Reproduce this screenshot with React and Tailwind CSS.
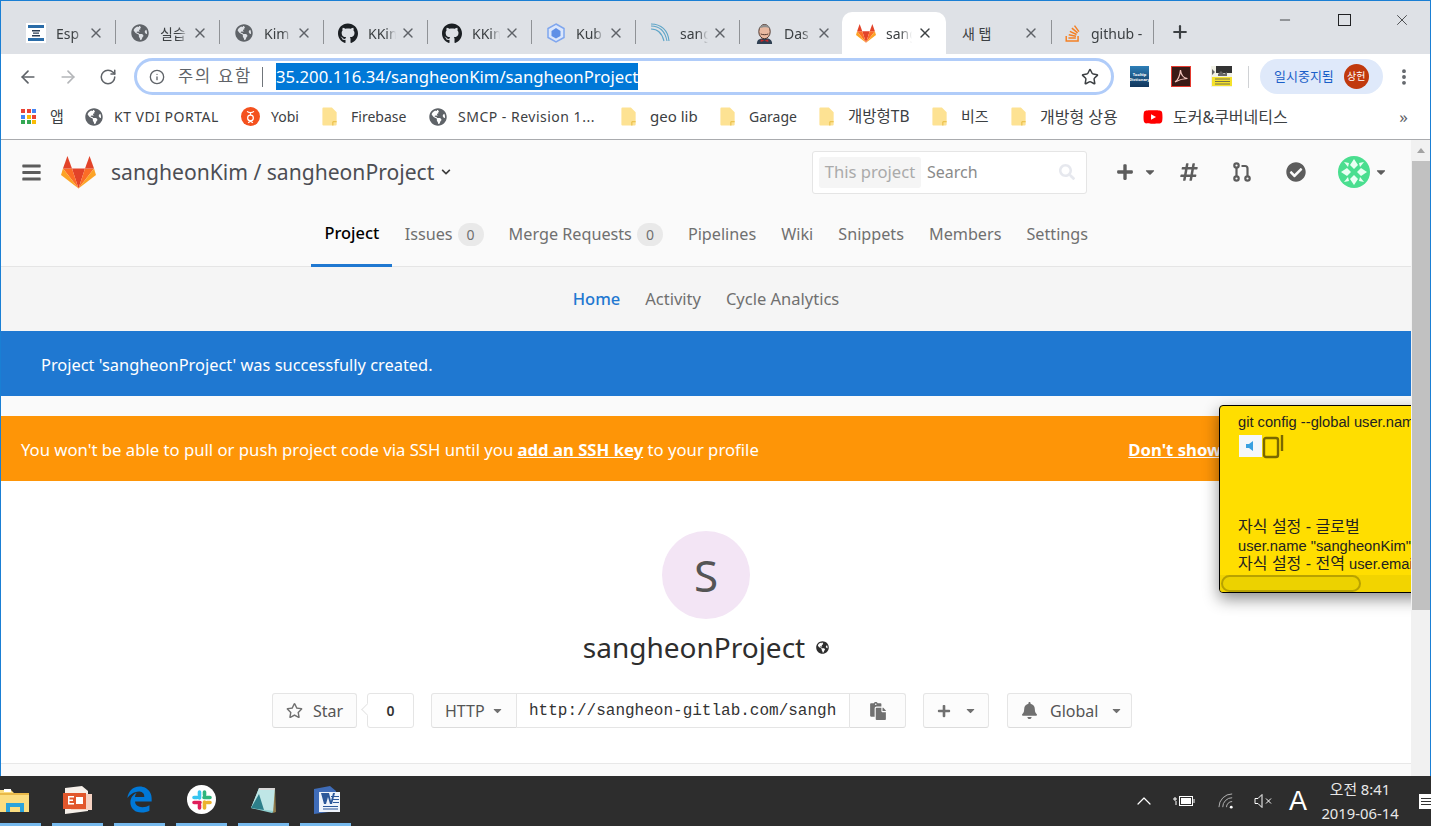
import React from 'react'
import {ArrowLeft, ArrowRight, RotateCw, Star, Info, X, Plus, Minus, ChevronUp, EllipsisVertical} from 'lucide-react'
import {FaGithub, FaStackOverflow, FaGlobeAmericas, FaBars, FaPlus, FaHashtag, FaCheckCircle, FaBell, FaRegStar, FaSearch, FaCaretDown, FaChevronDown, FaEdgeLegacy, FaPaste, FaYoutube} from 'react-icons/fa'

const Globe = () => <FaGlobeAmericas className="text-[18px] text-[#5f6368] shrink-0" />

const Fox = ({className}) => (
  <svg viewBox="0 0 36 34" className={className}>
    <polygon points="18,33.5 11.3,13 24.7,13" fill="#e24329" />
    <polygon points="18,33.5 11.3,13 2,13" fill="#fc6d26" />
    <polygon points="18,33.5 24.7,13 34,13" fill="#fc6d26" />
    <polygon points="2,13 0,19.5 18,33.5" fill="#fca326" />
    <polygon points="34,13 36,19.5 18,33.5" fill="#fca326" />
    <polygon points="2,13 6.6,0 11.3,13" fill="#e24329" />
    <polygon points="24.7,13 29.4,0 34,13" fill="#e24329" />
  </svg>
)

const FolderBookmark = () => (
  <svg viewBox="0 0 16 20" className="w-[16px] h-[19px] shrink-0 -ml-[1px]">
    <path d="M1 0.5h9l5 5v13a1 1 0 0 1-1 1H1a1 1 0 0 1-1-1V1.5a1 1 0 0 1 1-1z" fill="#fde293" />
    <path d="M11 19.5v-4h4" fill="none" stroke="#e8b93c" strokeWidth="1" />
  </svg>
)

const YobiIcon = () => (
  <svg viewBox="0 0 20 20" className="w-[19px] h-[19px] shrink-0">
    <circle cx="10" cy="10" r="10" fill="#f4511e" />
    <path d="M6.500 4.500c1 2 6 2 7 0M10 6.500v2" fill="none" stroke="#fff" strokeWidth="1.300" />
    <circle cx="10" cy="11.500" r="3" fill="none" stroke="#fff" strokeWidth="1.300" />
    <path d="M7.500 16.500l5-3M12.500 16.500l-5-3" fill="none" stroke="#fff" strokeWidth="1.300" />
  </svg>
)

const EspIcon = () => (
  <svg viewBox="0 0 20 20" className="w-[20px] h-[20px]">
    <rect width="20" height="20" fill="#fff" />
    <path d="M2 2h16v3H2zM2 15h16v3H2z" fill="#2a6ca8" />
    <path d="M6 7h8v1.4H6zM7 9.4h6v1.4H7zM6 12h8v1.4H6z" fill="#2b3c52" />
  </svg>
)

const KubeIcon = () => (
  <svg viewBox="0 0 20 20" className="w-[20px] h-[20px]">
    <polygon points="10,1 18,5.5 18,14.5 10,19 2,14.5 2,5.5" fill="#dbe6fb" stroke="#7fa6ee" strokeWidth="1.5" />
    <polygon points="10,5 14.5,8 14.5,13 10,15.5 5.5,13 5.5,8" fill="#5f8fe6" />
  </svg>
)

const WaveIcon = () => (
  <svg viewBox="0 0 20 20" className="w-[20px] h-[20px]" fill="none" stroke="#5ea5c8" strokeWidth="1.1">
    <path d="M1 3c8 0 14 5 16 15" />
    <path d="M1 6c6 0 11 4 13 12" />
    <path d="M1 1c10 0 17 6 18 17" />
  </svg>
)

const JenkinsIcon = () => (
  <svg viewBox="0 0 20 22" className="w-[19px] h-[21px]">
    <path d="M2 22c0-4 2-6 8-6s8 2 8 6z" fill="#2f3f52" />
    <ellipse cx="10" cy="9" rx="6" ry="7.5" fill="#e8b8a0" stroke="#4a3028" strokeWidth="1" />
    <path d="M4 6c1-5 11-6 12 0-3-2-9-2-12 0z" fill="#8f8f8f" />
    <path d="M6 11.500c2 1 6 1 8 0" fill="none" stroke="#4a3028" strokeWidth="1" />
    <path d="M6 17l4 1.500L14 17v3l-4-1.500L6 20z" fill="#c62828" />
  </svg>
)

const tabs = [
  {label: 'Esp', icon: <EspIcon />, sep: true},
  {label: '실습 과제', icon: <Globe />, sep: true},
  {label: 'Kim', icon: <Globe />, sep: true},
  {label: 'KKim', icon: <FaGithub className="text-[21px] text-[#1b1f23]" />, sep: true},
  {label: 'KKim', icon: <FaGithub className="text-[21px] text-[#1b1f23]" />, sep: true},
  {label: 'Kub', icon: <KubeIcon />, sep: true},
  {label: 'sang', icon: <WaveIcon />, sep: true},
  {label: 'Das', icon: <JenkinsIcon />, sep: false},
  {label: 'sang', icon: <Fox className="w-[20px] h-[19px]" />, active: true, sep: false},
  {label: '새 탭', sep: true},
  {label: 'github -', icon: <FaStackOverflow className="text-[19px] text-[#f48024]" />, sep: true, wide: true},
]

function Tab({tab}) {
  if (tab.active) {
    return (
      <div className="w-[104px] h-[42px] -ml-[2px] mr-[2px] bg-white rounded-t-[10px] flex items-center pl-[14px] shrink-0 text-[#3c4043]">
        <span className="w-[20px] flex justify-center shrink-0">{tab.icon}</span>
        <span className="ml-[10px] w-[26px] overflow-hidden whitespace-nowrap text-[14px] [mask-image:linear-gradient(to_right,black_55%,transparent)]">{tab.label}</span>
        <X size={16} strokeWidth={2} className="ml-[5px] text-[#3c4043]" />
      </div>
    )
  }
  if (tab.wide) {
    return (
      <div className="w-[102px] h-[42px] flex items-center shrink-0 relative pl-[10px] text-[#3c4043]">
        <span className="w-[20px] flex justify-center shrink-0">{tab.icon}</span>
        <span className="ml-[9px] w-[60px] overflow-hidden whitespace-nowrap text-[14px] [mask-image:linear-gradient(to_right,black_85%,transparent)]">{tab.label}</span>
        <span className="absolute right-0 top-[8px] h-[24px] w-px bg-[#8f9296]" />
      </div>
    )
  }
  return (
    <div className="w-[104px] h-[42px] flex items-center shrink-0 relative pl-[14px] text-[#3c4043]">
      {tab.icon && <span className="w-[20px] flex justify-center shrink-0">{tab.icon}</span>}
      <span className={tab.icon ? 'ml-[10px] w-[28px] overflow-hidden whitespace-nowrap text-[14px] [mask-image:linear-gradient(to_right,black_65%,transparent)]' : 'w-[57px] whitespace-nowrap text-[14px]'}>{tab.label}</span>
      <X size={16} strokeWidth={2} className="ml-[4px] text-[#5f6368]" />
      {tab.sep && <span className="absolute right-0 top-[8px] h-[24px] w-px bg-[#8f9296]" />}
    </div>
  )
}

function TabStrip() {
  return (
    <div className="h-[53px] bg-[#dee1e6] flex items-end pl-[11px] shrink-0">
      {tabs.map((t, i) => <Tab key={i} tab={t} />)}
      <Plus size={20} strokeWidth={2.6} className="ml-[16px] mb-[12px] text-[#3c4043]" />
      <div className="ml-auto self-start flex items-center h-[37px] text-[#202124]">
        <Minus size={16} strokeWidth={1.2} className="mr-[45px]" />
        <span className="w-[13px] h-[12px] border border-[#202124] mr-[42px]" />
        <X size={18} strokeWidth={1} className="mr-[19px]" />
      </div>
    </div>
  )
}

function ExtTooltip() {
  return (
    <div className="w-[19px] h-[21px] bg-gradient-to-b from-[#2d7fb8] to-[#12365c] flex flex-col items-center justify-center text-[4px] leading-[5px] font-bold text-white overflow-hidden">
      <span>Tooltip</span>
      <span>Dictionary</span>
    </div>
  )
}

function ExtPdf() {
  return (
    <svg viewBox="0 0 20 21" className="w-[20px] h-[21px]">
      <rect x="0.5" y="0.5" width="19" height="20" fill="#3a1a16" stroke="#e53a2f" />
      <path d="M4 16c3-2 5-7 5.5-12 .5 5 2.5 8 7 8.5-4 0-8 1-12.5 3.500z" fill="none" stroke="#f4c5bd" strokeWidth="1.2" />
    </svg>
  )
}

function ExtNote() {
  return (
    <svg viewBox="0 0 21 21" className="w-[21px] h-[21px]">
      <rect width="21" height="21" fill="#f1f1e6" />
      <rect x="5" y="0" width="16" height="7" fill="#333" />
      <path d="M1 3l3 3-3 3zM7 8l3-3 3 3 3-2v4H7z" fill="#666" />
      <rect x="1" y="11" width="20" height="9" fill="#f5e22a" />
      <path d="M4 13h15M4 15.500h15M4 18h15" stroke="#555" strokeWidth="0.8" />
    </svg>
  )
}

function Toolbar() {
  return (
    <div className="h-[42px] pt-[3px] flex items-center bg-white shrink-0 text-[#5f6368]">
      <ArrowLeft size={20} strokeWidth={2} className="ml-[17px]" />
      <ArrowRight size={20} strokeWidth={2} className="ml-[20px] text-[#b4b6b9]" />
      <RotateCw size={18} strokeWidth={2} className="ml-[21px]" />
      <div className="ml-[17px] w-[980px] h-[37px] rounded-full border-[3px] border-[#b0ccf9] flex items-center pl-[12px] pr-[12px]">
        <Info size={16} strokeWidth={2} className="text-[#5f6368]" />
        <span className="ml-[13px] text-[16.500px] tracking-[1.800px] text-[#5f6368] whitespace-nowrap">주의 요함</span>
        <span className="ml-[10px] w-px h-[20px] bg-[#70757a]" />
        <span className="ml-[13px] bg-[#0078d7] text-white text-[16.700px] leading-[27px] h-[27px] whitespace-nowrap">35.200.116.34/sangheonKim/sangheonProject</span>
        <Star size={18} strokeWidth={2} className="ml-auto text-[#3c4043]" />
      </div>
      <span className="ml-[16px] flex"><ExtTooltip /></span>
      <span className="ml-[22px] flex"><ExtPdf /></span>
      <span className="ml-[20px] flex"><ExtNote /></span>
      <span className="ml-[16px] w-px h-[22px] bg-[#d0d2d5]" />
      <div className="ml-[11px] w-[123px] h-[35px] rounded-full bg-[#dfe9fa] flex items-center pl-[14px] text-[#1a5fc8]">
        <span className="text-[13px] whitespace-nowrap">일시중지됨</span>
        <span className="ml-[10px] w-[25px] h-[25px] rounded-full bg-[#c1390d] text-white text-[10px] flex items-center justify-center">상헌</span>
      </div>
      <EllipsisVertical size={20} strokeWidth={2.6} className="ml-[11px]" />
    </div>
  )
}

function AppsGrid() {
  const colors = ['#ea4335', '#ea4335', '#4285f4', '#4285f4', '#fbbc05', '#ea4335', '#34a853', '#34a853', '#fbbc05']
  return (
    <span className="w-[15px] grid grid-cols-3 gap-[1.5px] shrink-0">
      {colors.map((c, i) => <span key={i} className="w-[4px] h-[4px]" style={{background: c}} />)}
    </span>
  )
}

const bookmarks = [
  {label: '앱', icon: <AppsGrid />, cls: 'w-[64px] gap-[14px] text-[15px]'},
  {label: 'KT VDI PORTAL', icon: <Globe />, cls: 'w-[156px] gap-[11px] text-[14px] tracking-[0.5px]'},
  {label: 'Yobi', icon: <YobiIcon />, cls: 'w-[82px] gap-[11px] text-[14px]'},
  {label: 'Firebase', icon: <FolderBookmark />, cls: 'w-[106px] gap-[13px] text-[14px]'},
  {label: 'SMCP - Revision 1...', icon: <Globe />, cls: 'w-[193px] gap-[11px] text-[14px] tracking-[0.5px]'},
  {label: 'geo lib', icon: <FolderBookmark />, cls: 'w-[99px] gap-[13px] text-[15px]'},
  {label: 'Garage', icon: <FolderBookmark />, cls: 'w-[99px] gap-[13px] text-[14px]'},
  {label: '개방형TB', icon: <FolderBookmark />, cls: 'w-[113px] gap-[13px] text-[15.500px]'},
  {label: '비즈', icon: <FolderBookmark />, cls: 'w-[79px] gap-[13px] text-[15px]'},
  {label: '개방형 상용', icon: <FolderBookmark />, cls: 'w-[131px] gap-[13px] text-[16px]'},
  {label: '도커&쿠버네티스', icon: <FaYoutube className="text-[20px] text-[#f00] shrink-0" />, cls: 'w-[240px] gap-[10px] text-[16px]'},
]

function Bookmarks() {
  return (
    <div className="h-[44px] pb-[2px] flex items-center pl-[20px] bg-white border-b border-[#a9abae] shrink-0">
      {bookmarks.map(b => (
        <div key={b.label} className={`flex items-center text-[#3c4043] whitespace-nowrap ${b.cls}`}>
          {b.icon}
          <span>{b.label}</span>
        </div>
      ))}
      <span className="ml-auto mr-[22px] text-[#5f6368] text-[17px] leading-none">»</span>
    </div>
  )
}

const MergeIcon = () => (
  <svg viewBox="0 0 18 20" className="w-[18px] h-[20px]" fill="none" stroke="#5c5c5c" strokeWidth="2.2">
    <circle cx="3.500" cy="3.500" r="2.200" />
    <circle cx="3.500" cy="16.500" r="2.200" />
    <circle cx="14.500" cy="16.500" r="2.200" />
    <path d="M3.500 6v8M14.500 14V6.500a2.500 2.500 0 0 0-2.500-2.500H8.500" />
  </svg>
)

const AvatarGem = () => (
  <svg viewBox="0 0 32 32" className="w-[32px] h-[32px]">
    <circle cx="16" cy="16" r="16" fill="#4ade8f" />
    <path d="M16 3l4 6-4 4-4-4zM16 29l4-6-4-4-4 4zM3 16l6-4 4 4-4 4zM29 16l-6-4-4 4 4 4z" fill="#eafff3" />
    <path d="M6 6l5 1-1 4zM26 6l-5 1 1 4zM6 26l5-1-1-4zM26 26l-5-1 1-4z" fill="#eafff3" />
  </svg>
)

function Header() {
  return (
    <div className="h-[67px] pb-[3px] flex items-center shrink-0 text-[#5c5c5c]">
      <FaBars className="ml-[20px] text-[21px]" />
      <Fox className="ml-[19px] w-[35px] h-[33px]" />
      <span className="ml-[15px] text-[21.100px] text-[#4c4e54] whitespace-nowrap">sangheonKim / sangheonProject</span>
      <FaChevronDown className="ml-[7px] text-[10px] text-[#3c3c3c]" />
      <div className="ml-auto w-[275px] h-[43px] bg-white border border-[#e5e5e5] rounded-[3px] flex items-center pl-[6px] pr-[11px]">
        <span className="w-[102px] h-[31px] bg-[#f5f5f5] rounded-[3px] text-[#aaa] text-[16.600px] flex items-center justify-center whitespace-nowrap">This project</span>
        <span className="ml-[6px] text-[16px] text-[#8a8a8a]">Search</span>
        <FaSearch className="ml-auto text-[16px] text-[#e6e8ee]" />
      </div>
      <FaPlus className="ml-[29px] text-[18px]" />
      <FaCaretDown className="ml-[9px] text-[14px]" />
      <FaHashtag className="ml-[22px] text-[20px]" />
      <span className="ml-[34px] flex"><MergeIcon /></span>
      <FaCheckCircle className="ml-[35px] text-[20px]" />
      <span className="ml-[32px] flex"><AvatarGem /></span>
      <FaCaretDown className="ml-[4px] mr-[23px] text-[14px]" />
    </div>
  )
}

const navItems = [
  {label: 'Project', active: true},
  {label: 'Issues', badge: '0'},
  {label: 'Merge Requests', badge: '0'},
  {label: 'Pipelines'},
  {label: 'Wiki'},
  {label: 'Snippets'},
  {label: 'Members'},
  {label: 'Settings'},
]

function ProjectNav() {
  return (
    <div className="h-[60px] flex justify-center border-b border-[#e5e5e5] shrink-0 text-[16.200px]">
      {navItems.map(n => (
        <div key={n.label} className={n.active ? 'px-[13px] pb-[4px] flex items-center gap-[5px] h-[60px] border-b-[3px] border-[#1f78d1] text-black font-medium text-[16.400px]' : 'px-[12.500px] pb-[6px] flex items-center gap-[5px] h-[60px] text-[#707070]'}>
          <span>{n.label}</span>
          {n.badge && <span className="w-[26px] h-[23px] rounded-full bg-[#e9e9e9] text-[14px] flex items-center justify-center">{n.badge}</span>}
        </div>
      ))}
    </div>
  )
}

function SubNav() {
  return (
    <div className="h-[64px] pt-[1px] bg-[#f5f5f5] flex justify-center items-center gap-[25px] text-[16.500px] text-[#707070] shrink-0">
      <span className="text-[#1f78d1] font-medium">Home</span>
      <span>Activity</span>
      <span>Cycle Analytics</span>
    </div>
  )
}

function Banners() {
  return (
    <>
      <div className="h-[65px] pt-[4px] bg-[#1f78d1] text-white text-[16.400px] flex items-center pl-[40px] shrink-0">
        Project 'sangheonProject' was successfully created.
      </div>
      <div className="h-[65px] pt-[2px] mt-[20px] bg-[#fe9507] text-white text-[16.700px] flex items-center pl-[20px] shrink-0 whitespace-nowrap">
        <span>You won't be able to pull or push project code via SSH until you <a className="font-bold underline">add an SSH key</a> to your profile</span>
        <a className="ml-auto mr-[139px] font-bold underline">Don't show again</a>
      </div>
    </>
  )
}

const btn = 'h-[35px] border border-[#e5e5e5] border-b-[#dcdcdc] bg-[#fcfcfc] flex items-center text-[16px] text-[#555] shrink-0'

function ProjectHome() {
  return (
    <div className="flex-1 flex flex-col items-center bg-white pt-[50px]">
      <div className="w-[88px] h-[88px] rounded-full bg-[#f3e5f5] text-[#555] text-[44px] flex items-center justify-center">S</div>
      <div className="mt-[9px] flex items-center h-[38px] text-[28px] text-[#2e2e2e]">
        sangheonProject
        <FaGlobeAmericas className="ml-[11px] text-[13px] text-[#2e2e2e]" />
      </div>
      <div className="mt-[27px] flex pr-[8px]">
        <div className={`${btn} w-[85px] rounded-[3px] pl-[13px] gap-[10px]`}>
          <FaRegStar className="text-[17px] text-[#707070]" />
          <span>Star</span>
        </div>
        <div className="ml-[10px] w-[47px] h-[35px] border border-[#e5e5e5] rounded-[3px] bg-white flex items-center justify-center text-[14px] font-semibold text-[#333] relative">
          <span className="absolute -left-[5px] top-[11px] w-[9px] h-[9px] rotate-45 bg-white border-l border-b border-[#e5e5e5]" />
          0
        </div>
        <div className="ml-[17px] flex">
          <div className={`${btn} w-[86px] rounded-l-[3px] pl-[13px] gap-[6px] text-[#333]`}>
            <span>HTTP</span>
            <FaCaretDown className="text-[13px] text-[#707070]" />
          </div>
          <div className="w-[332px] h-[35px] border-y border-[#e5e5e5] bg-white flex items-center pl-[12px]">
            <span className="whitespace-nowrap text-[16px] text-[#333] font-['Liberation_Mono',monospace]">http://sangheon-gitlab.com/sangh</span>
          </div>
          <div className={`${btn} w-[57px] rounded-r-[3px] justify-center`}>
            <FaPaste className="text-[18px] text-[#707070]" />
          </div>
        </div>
        <div className={`${btn} ml-[17px] w-[66px] rounded-[3px] pl-[13px] gap-[13px]`}>
          <FaPlus className="text-[14px] text-[#707070]" />
          <FaCaretDown className="text-[13px] text-[#707070]" />
        </div>
        <div className={`${btn} ml-[18px] w-[125px] rounded-[3px] pl-[13px] gap-[12px]`}>
          <FaBell className="text-[17px] text-[#707070]" />
          <span>Global</span>
          <FaCaretDown className="text-[13px] text-[#707070]" />
        </div>
      </div>
      <div className="mt-[35px] w-full border-t border-[#e8e8e8] flex-1 bg-[#fafafa]" />
    </div>
  )
}

function StickyNote() {
  return (
    <div className="absolute left-[1218px] top-[265px] w-[260px] h-[188px] bg-[#ffde00] border border-black rounded-[4px] shadow-[0_6px_16px_rgba(0,0,0,0.45)] overflow-hidden text-[14.700px] leading-[18px] text-[#222] font-['Liberation_Sans','Noto_Sans_CJK_KR',sans-serif]">
      <div className="pl-[18px] pt-[7px] whitespace-nowrap">git config --global user.name</div>
      <div className="pl-[19px] pt-[4px] flex items-start">
        <span className="w-[23px] h-[22px] bg-[#f5f7fa] flex items-center justify-center">
          <svg viewBox="0 0 12 12" className="w-[12px] h-[12px]"><path d="M1 4h3l4-3v10L4 8H1z" fill="#3aa0e0" /></svg>
        </span>
        <svg viewBox="0 0 22 24" className="w-[22px] h-[24px]" fill="none" stroke="#7a6800" strokeWidth="2.400">
          <rect x="2" y="3" width="14" height="19" rx="2" />
          <path d="M20 0v16" />
        </svg>
      </div>
      <div className="pl-[18px] pt-[58px] whitespace-nowrap text-[16px] leading-[20px]">자식 설정 - 글로벌</div>
      <div className="pl-[18px] whitespace-nowrap">user.name "sangheonKim"</div>
      <div className="pl-[18px] whitespace-nowrap"><span className="text-[16px]">자식 설정 - 전역</span> user.email</div>
      <div className="absolute bottom-0 left-0 right-0 h-[17px] bg-[#f2d400]">
        <div className="ml-[1px] w-[140px] h-[17px] rounded-full bg-[#ecd200] border-2 border-[#b8a200]" />
      </div>
    </div>
  )
}

function Scrollbar() {
  return (
    <div className="w-[19px] bg-[#f1f1f1] flex flex-col items-center shrink-0">
      <div className="h-[21px] flex items-center justify-center">
        <span className="w-0 h-0 border-x-[4px] border-x-transparent border-b-[5px] border-b-[#a3a3a3]" />
      </div>
      <div className="w-[18px] h-[449px] bg-[#c1c1c1]" />
    </div>
  )
}

const ExplorerIcon = () => (
  <svg viewBox="0 0 30 24" className="w-[30px] h-[24px]">
    <path d="M0 2h11l3 3h15v19H0z" fill="#fbdd80" />
    <path d="M0 5h29v2H0z" fill="#e9b949" />
    <path d="M4 1h7v3H4z" fill="#fff" />
    <path d="M6 15h18v9h-4v-5H10v5H6z" fill="#2aa3dc" />
  </svg>
)

const PowerPointIcon = () => (
  <svg viewBox="0 0 30 28" className="w-[30px] h-[28px]">
    <path d="M2 2l17-2 6 5v20l-23 3z" fill="#f6f0ea" />
    <path d="M0 7h23v16H0z" fill="#e2572c" />
    <path d="M23 8h6v16H8v-1h15z" fill="#f6d2c2" />
    <path d="M5 10h6v1.500H6.500v2H10V15H6.500v2H11v1.500H5zM13 11h7v7h-7z" fill="#fff" />
  </svg>
)

const SlackIcon = () => (
  <span className="w-[29px] h-[29px] rounded-full bg-white flex items-center justify-center">
    <svg viewBox="0 0 20 20" className="w-[20px] h-[20px]" fill="none" strokeWidth="3.600" strokeLinecap="round">
      <path d="M7.500 2v6M2 7.500h3" stroke="#36c5f0" />
      <path d="M18 7.500h-6M12.500 2v3" stroke="#2eb67d" />
      <path d="M12.500 18v-6M18 12.500h-3" stroke="#ecb22e" />
      <path d="M2 12.500h6M7.500 18v-3" stroke="#e01e5a" />
    </svg>
  </span>
)

const NotepadIcon = () => (
  <svg viewBox="0 0 28 28" className="w-[28px] h-[28px]">
    <polygon points="9,2 25,2 25,25 22,27 1,22" fill="#8fd0d0" />
    <polygon points="9,2 25,2 24,25 1,22" fill="#bfe6e6" />
    <polygon points="1,22 9,8 14,24" fill="#2d7f8a" />
    <path d="M9 2h16v2H9z" fill="#d8d8d8" />
    <path d="M25 2l1 24-3 1z" fill="#8f7a4a" />
  </svg>
)

const WordIcon = () => (
  <svg viewBox="0 0 30 28" className="w-[30px] h-[28px]">
    <path d="M3 3l16-3 6 5v20l-22 3z" fill="#3f6cb8" />
    <path d="M8 6h21v20H8z" fill="#eef3fb" />
    <path d="M10 7h8l2 8 2-8h2l-3 11h-2l-2-7-2 7h-2z" fill="#2b579a" />
    <path d="M12 20h15v1H12zM12 22.500h15v1H12zM20 10h8v1h-8zM22 13h6v1h-6zM22 16h6v1h-6z" fill="#2b579a" />
  </svg>
)

const dock = [
  {icon: <ExplorerIcon />, cls: 'w-[41px] justify-start'},
  {icon: <PowerPointIcon />},
  {icon: <FaEdgeLegacy className="text-[27px] text-[#0078d7]" />},
  {icon: <SlackIcon />},
  {icon: <NotepadIcon />},
  {icon: <WordIcon />},
]

function Taskbar() {
  return (
    <div className="h-[50px] bg-[#2d2d2d] flex text-white shrink-0">
      <div className="flex gap-[11px]">
        {dock.map((d, i) => (
          <div key={i} className={`h-[50px] flex items-center border-b-[3px] border-[#76b9ed] ${d.cls || 'w-[51px] justify-center'}`}>
            {d.icon}
          </div>
        ))}
      </div>
      <div className="ml-auto flex items-center">
        <ChevronUp size={24} strokeWidth={1.2} />
        <svg viewBox="0 0 22 12" className="ml-[17px] w-[22px] h-[12px]" fill="none" stroke="#fff">
          <rect x="6.500" y="1.500" width="13" height="9" />
          <rect x="8" y="3" width="10" height="6" fill="#fff" stroke="none" />
          <path d="M21 4v4M0 4h4M2 2v4M3 6v4" strokeWidth="1" />
        </svg>
        <svg viewBox="0 0 18 18" className="ml-[23px] w-[17px] h-[17px]" fill="none" stroke="#b8b8b8" strokeWidth="1">
          <path d="M1 15A14 14 0 0 1 15 1M5 15A10 10 0 0 1 15 5M9 15a6 6 0 0 1 6-6" />
          <circle cx="14" cy="15" r="1.500" fill="#fff" stroke="none" />
        </svg>
        <svg viewBox="0 0 20 14" className="ml-[19px] w-[20px] h-[14px]" fill="none" stroke="#fff" strokeWidth="1">
          <path d="M1 4.500h3l4-4v13l-4-4H1zM12 4.500l5 5M17 4.500l-5 5" />
        </svg>
        <span className="ml-[15px] text-[27px] leading-none font-['Liberation_Sans',sans-serif]">A</span>
        <div className="ml-[14px] w-[78px] flex flex-col items-center text-[14.800px] leading-[24px] whitespace-nowrap text-[#e8e8e8]">
          <span>오전 8:41</span>
          <span>2019-06-14</span>
        </div>
        <div className="ml-[20px] w-[12px] flex flex-col items-start">
          <span className="w-[12px] h-[15px] bg-white flex flex-col justify-center gap-[2px] pl-[2px]">
            <span className="block w-[10px] h-px bg-[#333]" />
            <span className="block w-[10px] h-px bg-[#333]" />
            <span className="block w-[10px] h-px bg-[#333]" />
          </span>
        </div>
      </div>
    </div>
  )
}

export default function App() {
  return (
    <div className="w-[1431px] h-[826px] flex flex-col overflow-hidden font-['Noto_Sans','Noto_Sans_CJK_KR',sans-serif]">
      <div className="flex-1 min-h-0 flex flex-col border-x border-t border-[#1a7fd4]">
        <TabStrip />
        <Toolbar />
        <Bookmarks />
        <div className="flex-1 min-h-0 flex">
          <main className="flex-1 min-w-0 flex flex-col bg-[#fafafa] relative overflow-hidden">
            <Header />
            <ProjectNav />
            <SubNav />
            <Banners />
            <ProjectHome />
            <StickyNote />
          </main>
          <Scrollbar />
        </div>
      </div>
      <Taskbar />
    </div>
  )
}
